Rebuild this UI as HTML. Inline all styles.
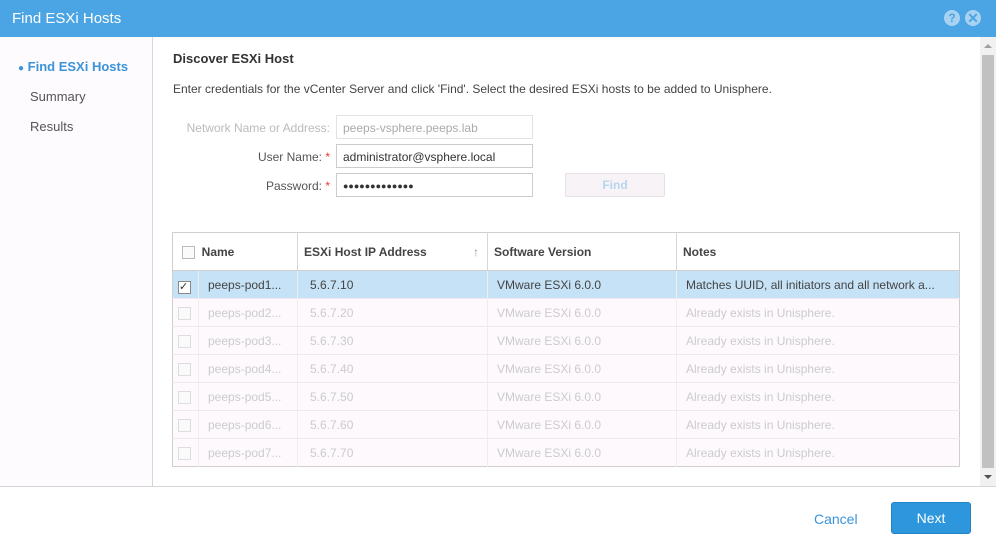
<!DOCTYPE html>
<html><head><style>
*{box-sizing:border-box;margin:0;padding:0}
body{width:996px;height:549px;position:relative;overflow:hidden;font-family:"Liberation Sans",Arial,sans-serif;font-size:12px;color:#333;background:#fff}
.hdr{position:absolute;left:0;top:0;width:996px;height:37px;background:#4ba4e3;color:#fff;font-size:15px;padding:10px 0 0 12px}
.ic{position:absolute;top:10px;width:16px;height:16px;border-radius:50%;background:#a8d2f2;color:#4ba4e3;font-weight:bold;font-size:12px;text-align:center;line-height:16px}
.side{position:absolute;left:0;top:37px;width:153px;height:449px;background:#fdfbfd;border-right:1px solid #d6d6d6}
.side div{position:absolute;left:30px;font-size:13px;color:#555}
.abs{position:absolute}
.lbl{position:absolute;text-align:right;width:160px;left:170px;font-size:12px;color:#555}
.inp{position:absolute;left:336px;width:197px;height:24px;border:1px solid #ccc;padding:5px 6px;font-size:12px}
.star{color:#e33}
table{position:absolute;left:172px;top:232px;width:788px;border-collapse:collapse;border:1px solid #cfcfcf;table-layout:fixed}
td{height:28px;border-left:1px solid #eee;border-top:1px solid #f0e8ee;padding-left:9px;color:#ccc;background:#fdf9fc;white-space:nowrap;overflow:hidden;font-size:12px}
th{height:38px;text-align:left;font-weight:bold;color:#444;border-left:1px solid #d6d6d6;padding-left:6px;background:#fff;white-space:nowrap;vertical-align:middle}
tr.sel td{background:#c6e2f6;color:#444;border-top-color:#cfcfcf}
.cb{display:inline-block;width:13px;height:13px;border:1px solid #ddd;background:#fafafa;vertical-align:-3px}
</style></head><body>
<div class="hdr">Find ESXi Hosts</div>
<div class="ic" style="left:944px">?</div>
<div class="ic" style="left:965px;font-size:14px">✕</div>
<div class="side">
<div style="top:22px;left:18px;color:#3b94d9;font-weight:bold"><span style="font-size:10px">●</span> Find ESXi Hosts</div>
<div style="top:52px">Summary</div>
<div style="top:82px">Results</div>
</div>
<div class="abs" style="left:173px;top:51px;font-size:13px;font-weight:bold;color:#333">Discover ESXi Host</div>
<div class="abs" style="left:173px;top:82px;color:#444">Enter credentials for the vCenter Server and click 'Find'. Select the desired ESXi hosts to be added to Unisphere.</div>
<div class="lbl" style="top:121px;color:#bbb">Network Name or Address:</div>
<div class="inp" style="top:115px;color:#aaa;border-color:#e2e2e2">peeps-vsphere.peeps.lab</div>
<div class="lbl" style="top:150px">User Name: <span class="star">*</span></div>
<div class="inp" style="top:144px">administrator@vsphere.local</div>
<div class="lbl" style="top:179px">Password: <span class="star">*</span></div>
<div class="inp" style="top:173px;font-size:9px;padding-top:7px">●●●●●●●●●●●●●</div>
<div class="abs" style="left:565px;top:173px;width:100px;height:24px;border:1px solid #e6e0e6;border-radius:2px;background:#f7f3f7;color:#b8d6ee;font-weight:bold;text-align:center;line-height:22px">Find</div>
<table>
<colgroup><col style="width:26px"><col style="width:99px"><col style="width:190px"><col style="width:189px"><col></colgroup>
<tr><th colspan="2" style="border-left:none;padding-left:9px"><span class="cb" style="border-color:#bbb"></span>&nbsp;&nbsp;Name</th><th>ESXi Host IP Address<span style="float:right;margin-right:8px;color:#999">↑</span></th><th>Software Version</th><th>Notes</th></tr>
<tr class="sel"><td style="padding-left:5px;border-left:none"><span class="cb" style="border-color:#888;background:#fff;font-size:11px;line-height:10px;color:#333">✓</span></td><td>peeps-pod1...</td><td style="padding-left:12px">5.6.7.10</td><td>VMware ESXi 6.0.0</td><td>Matches UUID, all initiators and all network a...</td></tr>
<tr><td style="padding-left:5px;border-left:none"><span class="cb"></span></td><td>peeps-pod2...</td><td style="padding-left:12px">5.6.7.20</td><td>VMware ESXi 6.0.0</td><td>Already exists in Unisphere.</td></tr>
<tr><td style="padding-left:5px;border-left:none"><span class="cb"></span></td><td>peeps-pod3...</td><td style="padding-left:12px">5.6.7.30</td><td>VMware ESXi 6.0.0</td><td>Already exists in Unisphere.</td></tr>
<tr><td style="padding-left:5px;border-left:none"><span class="cb"></span></td><td>peeps-pod4...</td><td style="padding-left:12px">5.6.7.40</td><td>VMware ESXi 6.0.0</td><td>Already exists in Unisphere.</td></tr>
<tr><td style="padding-left:5px;border-left:none"><span class="cb"></span></td><td>peeps-pod5...</td><td style="padding-left:12px">5.6.7.50</td><td>VMware ESXi 6.0.0</td><td>Already exists in Unisphere.</td></tr>
<tr><td style="padding-left:5px;border-left:none"><span class="cb"></span></td><td>peeps-pod6...</td><td style="padding-left:12px">5.6.7.60</td><td>VMware ESXi 6.0.0</td><td>Already exists in Unisphere.</td></tr>
<tr><td style="padding-left:5px;border-left:none"><span class="cb"></span></td><td>peeps-pod7...</td><td style="padding-left:12px">5.6.7.70</td><td>VMware ESXi 6.0.0</td><td>Already exists in Unisphere.</td></tr>
</table>
<div class="abs" style="left:980px;top:37px;width:16px;height:449px;background:#f1f1f1"></div>
<div class="abs" style="left:982px;top:55px;width:12px;height:413px;background:#c1c1c1"></div>
<div class="abs" style="left:984px;top:44px;border:4px solid transparent;border-bottom-color:#a0a0a0;border-top:none"></div>
<div class="abs" style="left:984px;top:475px;border:4px solid transparent;border-top-color:#505050;border-bottom:none"></div>
<div class="abs" style="left:0;top:486px;width:996px;height:1px;background:#d6d6d6"></div>
<div class="abs" style="left:814px;top:511px;font-size:14px;color:#3b94d9">Cancel</div>
<div class="abs" style="left:891px;top:502px;width:80px;height:32px;background:#2d96dd;border:1px solid #2484c6;border-radius:3px;color:#fff;font-size:14px;text-align:center;line-height:30px">Next</div>
</body></html>
